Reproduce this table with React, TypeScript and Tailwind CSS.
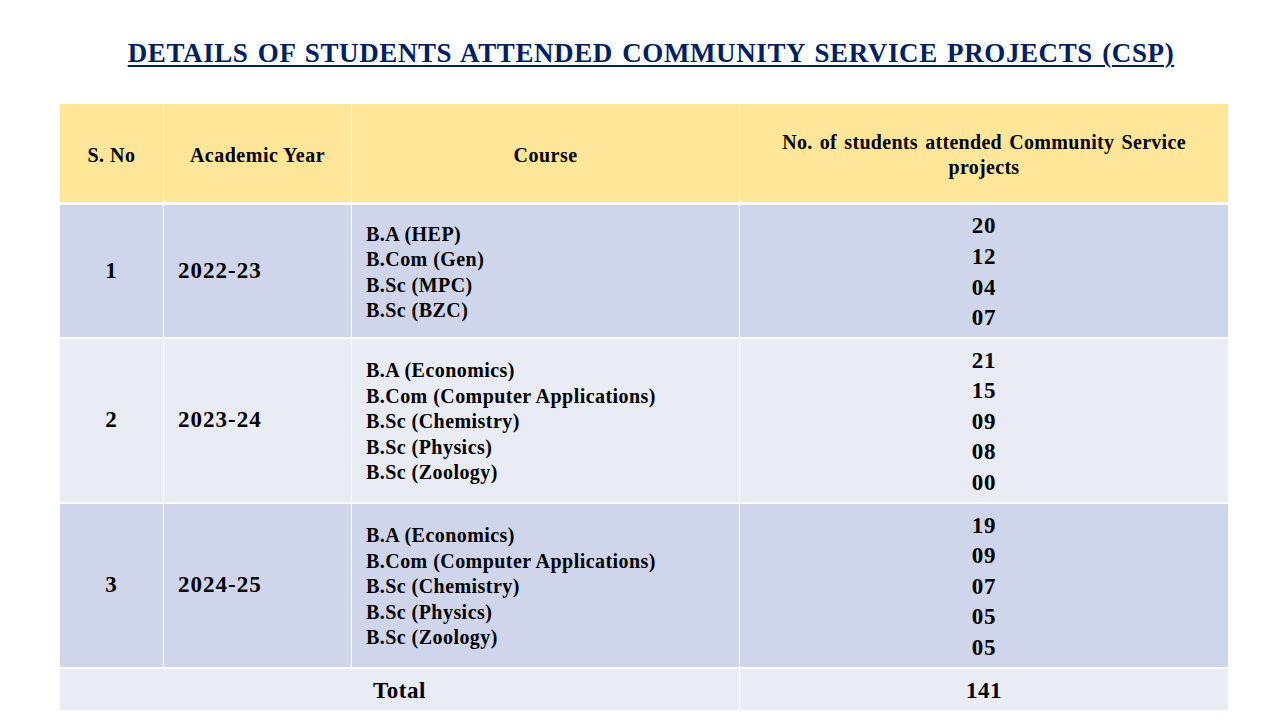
const rows = [
  {
    sno: '1',
    year: '2022-23',
    courses: ['B.A (HEP)', 'B.Com (Gen)', 'B.Sc (MPC)', 'B.Sc (BZC)'],
    counts: ['20', '12', '04', '07'],
    bg: 'bg-[#cfd5ea]',
    h: 'h-[132px]',
  },
  {
    sno: '2',
    year: '2023-24',
    courses: ['B.A (Economics)', 'B.Com (Computer Applications)', 'B.Sc (Chemistry)', 'B.Sc (Physics)', 'B.Sc (Zoology)'],
    counts: ['21', '15', '09', '08', '00'],
    bg: 'bg-[#e9ebf5]',
    h: 'h-[163px]',
  },
  {
    sno: '3',
    year: '2024-25',
    courses: ['B.A (Economics)', 'B.Com (Computer Applications)', 'B.Sc (Chemistry)', 'B.Sc (Physics)', 'B.Sc (Zoology)'],
    counts: ['19', '09', '07', '05', '05'],
    bg: 'bg-[#cfd5ea]',
    h: 'h-[163px]',
  },
]

export default function App() {
  return (
    <div className="h-[720px] w-[1280px] bg-white font-[family-name:'Liberation_Serif',serif] font-bold text-black">
      <div className="flex h-[104px] justify-center pl-[22px] pt-[36px]">
        <h1 className="h-[34px] text-[27px] leading-[34px] tracking-[0.6px] text-[#002060] underline decoration-2 underline-offset-[3px] [word-spacing:2px]">
          DETAILS OF STUDENTS ATTENDED COMMUNITY SERVICE PROJECTS (CSP)
        </h1>
      </div>

      <div className="ml-[60px] grid w-[1168px] grid-cols-[103px_187px_387px_488px] gap-x-px gap-y-[2px] bg-white">
        <div className="flex h-[98px] items-center justify-center bg-[#ffe699] pt-1 text-[20px] tracking-[0.5px]">S. No</div>
        <div className="flex h-[98px] items-center justify-center bg-[#ffe699] pt-1 text-[20px] tracking-[0.5px]">Academic Year</div>
        <div className="flex h-[98px] items-center justify-center bg-[#ffe699] pt-1 text-[20px] tracking-[0.5px]">Course</div>
        <div className="flex h-[98px] items-center justify-center bg-[#ffe699] pt-1 text-center text-[20px] leading-[25px] tracking-[0.3px] [word-spacing:2px]">
          No. of students attended Community Service
          <br />
          projects
        </div>

        {rows.map((r, i) => (
          <div key={r.sno} className="contents">
            <div className={`${r.bg} ${r.h} ${i === 0 ? 'mt-px' : ''} flex items-center justify-center text-[23px] tracking-[1px]`}>{r.sno}</div>
            <div className={`${r.bg} ${r.h} ${i === 0 ? 'mt-px' : ''} flex items-center pl-[14px] text-[23px] tracking-[1px]`}>{r.year}</div>
            <div className={`${r.bg} ${r.h} ${i === 0 ? 'mt-px' : ''} flex flex-col justify-center pl-[14px] pt-[3px] text-[20px] leading-[25.5px] tracking-[0.45px]`}>
              {r.courses.map((c) => (
                <div key={c}>{c}</div>
              ))}
            </div>
            <div className={`${r.bg} ${r.h} ${i === 0 ? 'mt-px' : ''} flex flex-col items-center justify-center pt-[3px] text-[23px] leading-[30.6px] tracking-[0.7px]`}>
              {r.counts.map((n, j) => (
                <div key={j}>{n}</div>
              ))}
            </div>
          </div>
        ))}

        <div className="col-span-3 flex h-[41px] items-center justify-center bg-[#e9ebf5] pt-[3px] text-[23px] tracking-[0.5px]">Total</div>
        <div className="flex h-[41px] items-center justify-center bg-[#e9ebf5] pt-[3px] text-[23px] tracking-[0.5px]">141</div>
      </div>
    </div>
  )
}
